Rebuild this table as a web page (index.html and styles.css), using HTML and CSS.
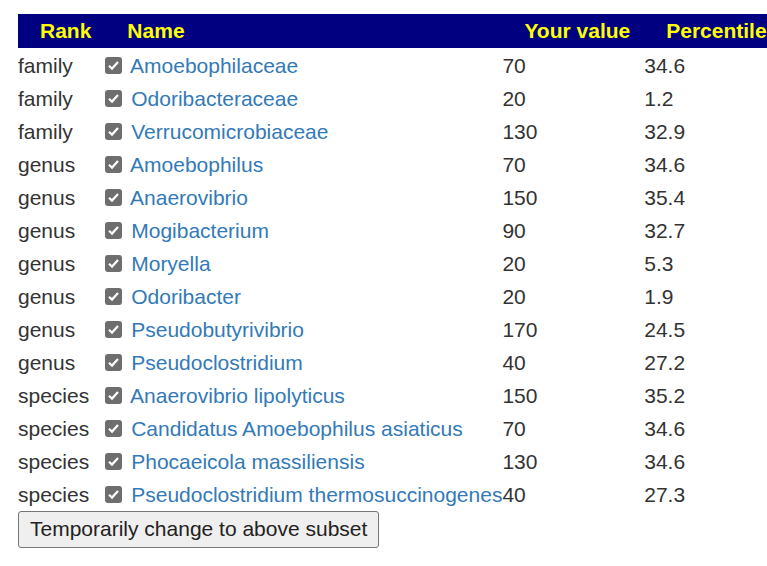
FILE: index.html
```html
<!DOCTYPE html>
<html>
<head>
<meta charset="utf-8">
<link rel="stylesheet" href="styles.css">
</head>
<body>
<div class="page">
<table class="taxa">
<thead>
<tr><th>Rank</th><th>Name</th><th>Your value</th><th>Percentile</th></tr>
</thead>
<tbody>
<tr><td>family</td><td><span class="cb"></span> <a href="#">Amoebophilaceae</a></td><td>70</td><td>34.6</td></tr>
<tr><td>family</td><td><span class="cb"></span> <a href="#">Odoribacteraceae</a></td><td>20</td><td>1.2</td></tr>
<tr><td>family</td><td><span class="cb"></span> <a href="#">Verrucomicrobiaceae</a></td><td>130</td><td>32.9</td></tr>
<tr><td>genus</td><td><span class="cb"></span> <a href="#">Amoebophilus</a></td><td>70</td><td>34.6</td></tr>
<tr><td>genus</td><td><span class="cb"></span> <a href="#">Anaerovibrio</a></td><td>150</td><td>35.4</td></tr>
<tr><td>genus</td><td><span class="cb"></span> <a href="#">Mogibacterium</a></td><td>90</td><td>32.7</td></tr>
<tr><td>genus</td><td><span class="cb"></span> <a href="#">Moryella</a></td><td>20</td><td>5.3</td></tr>
<tr><td>genus</td><td><span class="cb"></span> <a href="#">Odoribacter</a></td><td>20</td><td>1.9</td></tr>
<tr><td>genus</td><td><span class="cb"></span> <a href="#">Pseudobutyrivibrio</a></td><td>170</td><td>24.5</td></tr>
<tr><td>genus</td><td><span class="cb"></span> <a href="#">Pseudoclostridium</a></td><td>40</td><td>27.2</td></tr>
<tr><td>species</td><td><span class="cb"></span> <a href="#">Anaerovibrio lipolyticus</a></td><td>150</td><td>35.2</td></tr>
<tr><td>species</td><td><span class="cb"></span> <a href="#">Candidatus Amoebophilus asiaticus</a></td><td>70</td><td>34.6</td></tr>
<tr><td>species</td><td><span class="cb"></span> <a href="#">Phocaeicola massiliensis</a></td><td>130</td><td>34.6</td></tr>
<tr><td>species</td><td><span class="cb"></span> <a href="#">Pseudoclostridium thermosuccinogenes</a></td><td>40</td><td>27.3</td></tr>
</tbody>
</table>
<button class="btn" type="button">Temporarily change to above subset</button>
</div>
</body>
</html>
```
FILE: styles.css
```css
html, body {
  margin: 0;
  padding: 0;
  overflow: hidden;
  background: #fff;
}
.page {
  padding: 14px 0 0 18px;
  font-family: "Liberation Sans", Arial, sans-serif;
  font-size: 21px;
  color: #333;
}
.taxa {
  border-collapse: collapse;
  border-spacing: 0;
  white-space: nowrap;
}
.taxa th {
  background: #000080;
  color: #ffff00;
  font-weight: bold;
  text-align: left;
  padding: 5px 14px 5px 22px;
  line-height: 24px;
}
.taxa td {
  padding: 6px 0 3px;
  line-height: 24px;
  vertical-align: middle;
}
.taxa a {
  color: #337ab7;
  text-decoration: none;
}
.cb {
  display: inline-block;
  width: 17px;
  height: 17px;
  margin: 0 3px 0 0;
  border-radius: 3px;
  background: #6e6e6e url("data:image/svg+xml;utf8,<svg xmlns='http://www.w3.org/2000/svg' viewBox='0 0 17 17'><path d='M4 8.8 L7 11.6 L13 5' fill='none' stroke='white' stroke-width='2.2'/></svg>") no-repeat center / 17px 17px;
  vertical-align: -1px;
}
.btn {
  display: block;
  margin-top: 1px;
  font-family: "Liberation Sans", Arial, sans-serif;
  font-size: 21px;
  line-height: 24px;
  color: #222;
  background: #efefef;
  border: 1px solid #767676;
  border-radius: 3px;
  padding: 5px 11px 6px;
}
```
